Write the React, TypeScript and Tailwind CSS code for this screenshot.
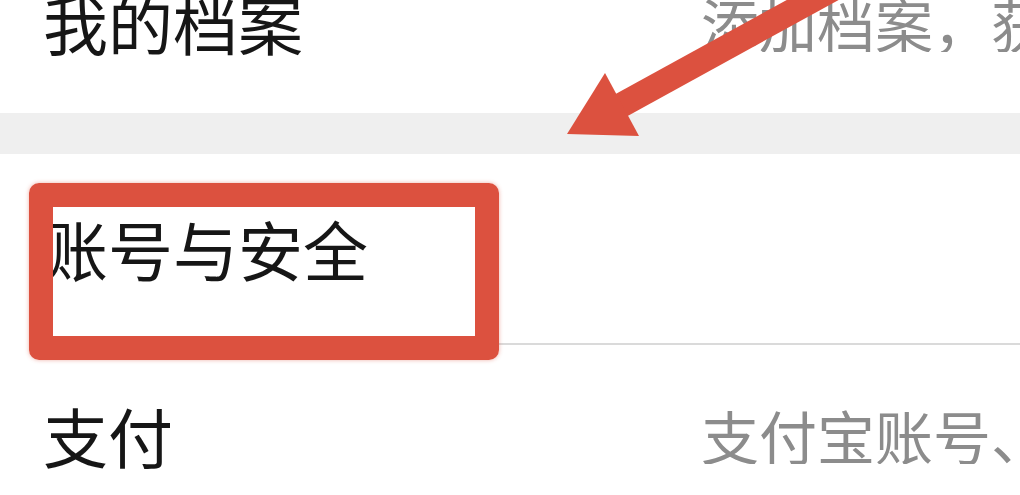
import React from "react";

const cjk = "font-['Noto_Sans_CJK_SC','Noto_Sans',sans-serif]";

type RowProps = {
  label: string;
  hint?: string;
  className?: string;
};

const Row: React.FC<RowProps> = ({ label, hint, className }) => (
  <div className={`grid grid-cols-[658px_1fr] items-center pl-[43px] ${className ?? ""}`}>
    <span className="text-[65px] leading-none text-[#161616] whitespace-nowrap">{label}</span>
    {hint && (
      <span className="text-[58px] leading-none text-[#8c8c8c] whitespace-nowrap overflow-hidden">
        {hint}
      </span>
    )}
  </div>
);

const Arrow: React.FC = () => (
  <svg
    className="absolute left-0 top-0 pointer-events-none"
    width="1020"
    height="200"
    viewBox="0 0 1020 200"
  >
    <line x1="618" y1="107" x2="880" y2="-37" stroke="#dc513f" strokeWidth="25" />
    <polygon points="605,73 567,134 639,136" fill="#dc513f" />
  </svg>
);

export default function App() {
  return (
    <div className={`relative h-[495px] w-[1020px] overflow-hidden bg-white ${cjk}`}>
      <div className="flex flex-col -mt-[68px]">
        <Row label="我的档案" hint="添加档案，获得更多" className="h-[181px]" />
        <div className="h-[41px] bg-[#efefef]" />
        <Row label="账号与安全" className="h-[189px]" />
        <div className="ml-[43px] h-[2px] bg-[#dadada]" />
        <Row label="支付" hint="支付宝账号、银行卡" className="h-[180px]" />
      </div>

      <Arrow />

      <div className="absolute left-[29px] top-[183px] h-[177px] w-[470px] rounded-[10px] border-[24px] border-[#dc513f] shadow-[0_0_4px_rgba(220,81,63,0.45)]" />
    </div>
  );
}
